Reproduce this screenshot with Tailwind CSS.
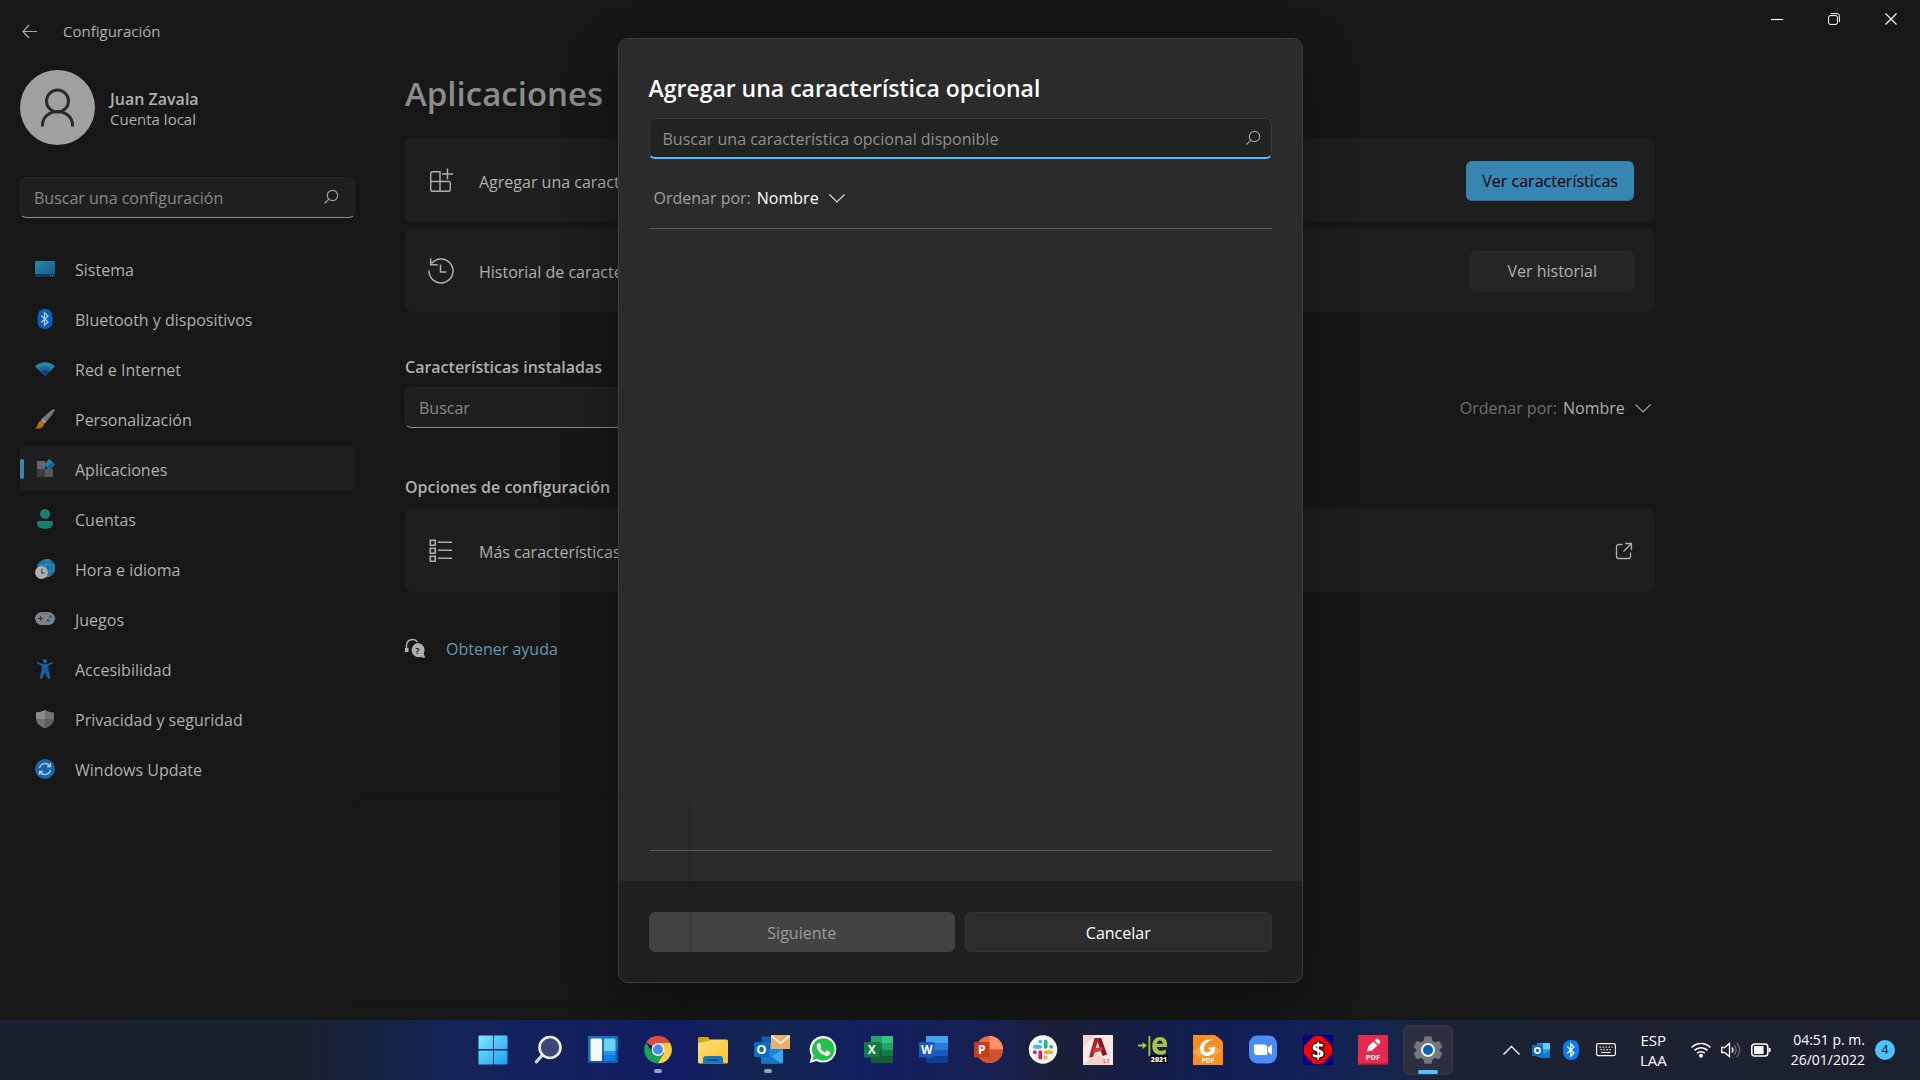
<!DOCTYPE html>
<html lang="es">
<head>
  <meta charset="UTF-8" />
  <meta name="viewport" content="width=device-width, initial-scale=1" />
  <title>Configuración</title>
  <script src="https://cdn.jsdelivr.net/npm/@tailwindcss/browser@4"></script>
  <style>
    body {
      font-family: 'Open Sans', 'Noto Sans', sans-serif;
    }
  </style>
</head>
<body class="h-screen flex flex-col overflow-hidden bg-[#171717] text-base text-[#b0b0b0]">

  <!-- Settings window -->
  <div class="relative flex-1 min-h-0 flex flex-col overflow-hidden">
    <header class="flex justify-between items-start">
      <div class="flex items-center h-[62px] pl-[22px] gap-[26px]">
        <button type="button" aria-label="Atrás">
          <svg class="w-[15px] h-[15px]" viewBox="0 0 15 15" fill="none" stroke="#a8a8a8" stroke-width="1.2"><path d="M15 7.5H1M7 1L1 7.5L7 14" /></svg>
        </button>
        <span class="text-[15px]">Configuración</span>
      </div>
      <div class="flex h-[38px] items-center pr-px text-white">
        <button type="button" aria-label="Minimizar" class="w-[57px] flex justify-center">
          <svg class="w-3 h-3" viewBox="0 0 12 12" fill="none" stroke="currentColor"><path d="M0 6.5H12" stroke-width="1.2" /></svg>
        </button>
        <button type="button" aria-label="Restaurar" class="w-[57px] flex justify-center">
          <svg class="w-3 h-3" viewBox="0 0 12 12" fill="none" stroke="currentColor"><rect x=".6" y="2.6" width="8.8" height="8.8" rx="1.5" /><path d="M2.8 .6H9.2a2.2 2.2 0 0 1 2.2 2.2V9" /></svg>
        </button>
        <button type="button" aria-label="Cerrar" class="w-[57px] flex justify-center">
          <svg class="w-3 h-3" viewBox="0 0 12 12" fill="none" stroke="currentColor" stroke-width="1.1"><path d="M.5 .5L11.5 11.5M11.5 .5L.5 11.5" /></svg>
        </button>
      </div>
    </header>

    <div class="flex flex-1 min-h-0 pt-2">
      <aside class="w-[355px] shrink-0 pl-5">
        <div class="flex items-center gap-[15px]">
          <svg class="w-[75px] h-[75px]" viewBox="0 0 75 75" fill="none">
            <circle cx="37.5" cy="37.5" r="37.5" fill="#a0a0a0" />
            <g stroke="#2a2a2a" stroke-width="3"><circle cx="37.5" cy="31" r="11" /><path d="M22.500 56.500V55a15 13.500 0 0 1 30 0v1.500" /></g>
          </svg>
          <div class="pt-0.5">
            <p class="font-semibold leading-5">Juan Zavala</p>
            <p class="text-[15px] leading-5">Cuenta local</p>
          </div>
        </div>

        <div class="relative mt-8">
          <input type="text" aria-label="Buscar una configuración" placeholder="Buscar una configuración" class="w-full h-[41px] rounded-md bg-[#1f1f1f] border border-[#252525] border-b-[#8a8a8a] px-[13px] placeholder:text-[#888888] outline-none" />
          <svg class="absolute right-4 top-3 w-4 h-4" viewBox="0 0 16 16" fill="none" stroke="#a0a0a0" stroke-width="1.2"><circle cx="9.500" cy="6.500" r="5.200" /><path d="M5.800 10.200L1.500 14.500" /></svg>
        </div>

        <nav class="mt-7 flex flex-col gap-[5px]">
          <a href="#" class="flex items-center h-[45px] pl-[15px] gap-5 rounded-md">
            <svg class="w-5 h-5" viewBox="0 0 20 20"><defs><linearGradient id="sis" x1="0" y1="0" x2="1" y2="1"><stop offset="0" stop-color="#2a86a4" /><stop offset=".5" stop-color="#1c7296" /><stop offset="1" stop-color="#17558c" /></linearGradient></defs><rect y="2" width="20" height="16" rx="1" fill="url(#sis)" /><path d="M0 15H20v2a1 1 0 0 1-1 1H1a1 1 0 0 1-1-1z" fill="#15355e" /><path d="M15 16h1v1h-1zM17 16h1v1h-1z" fill="#5d8ca8" /></svg>
            <span class="pt-0.5">Sistema</span>
          </a>
          <a href="#" class="flex items-center h-[45px] pl-[15px] gap-5 rounded-md">
            <svg class="w-5 h-5" viewBox="0 0 20 20" fill="none"><rect x="2.500" width="15" height="20" rx="7" fill="#0561b8" /><path d="M6.200 6.500L13 13l-3.500 3.200V3.800L13 7L6.200 13.500" stroke="#b9c6d3" stroke-width="1.300" /></svg>
            <span class="pt-0.5">Bluetooth y dispositivos</span>
          </a>
          <a href="#" class="flex items-center h-[45px] pl-[15px] gap-5 rounded-md">
            <svg class="w-5 h-5" viewBox="0 0 20 20"><path d="M10 17L0 7.500a14 14 0 0 1 20 0z" fill="#2984a5" /><path d="M10 17L3 10.200a10 10 0 0 1 14 0z" fill="#166498" /><path d="M10 17L5.600 12.700a6.500 6.500 0 0 1 8.800 0z" fill="#123f78" /></svg>
            <span class="pt-0.5">Red e Internet</span>
          </a>
          <a href="#" class="flex items-center h-[45px] pl-[15px] gap-5 rounded-md">
            <svg class="w-5 h-5" viewBox="0 0 20 20"><path d="M18 .4c1.200-.7 2.300.4 1.500 1.600C17 6 13 11 9.500 14.500L6 11C9.500 7 14 2.800 18 .4z" fill="#74777b" /><path d="M7.500 9.500L11 13l-1.500 1.500L6 11z" fill="#a0a0a0" /><path d="M6.300 11.800c1.500 0 3.200 1.500 2.700 3.500C8 19.500 4 20 .5 19.800c-.5-.4.200-.8 1-1.600C3.200 16 2.800 12.300 6.300 11.800z" fill="#bd6c1e" /><path d="M1 19.200c3 .2 6-.2 7.500-2.700-.8 3-4.500 3.600-8 3.300z" fill="#9c3d1c" /></svg>
            <span class="pt-0.5">Personalización</span>
          </a>
          <a href="#" aria-current="page" class="relative flex items-center h-[45px] pl-[15px] gap-5 rounded-md bg-[#1f1f1f]">
            <span class="absolute left-0 top-[13px] w-1 h-5 rounded-full bg-[#3a87b3]"></span>
            <svg class="w-5 h-5" viewBox="0 0 20 20"><path d="M2 2h8v8H2z" fill="#646669" /><path d="M2 10h8v8H3a1 1 0 0 1-1-1z" fill="#3b3d40" /><path d="M10 10h8v7a1 1 0 0 1-1 1h-7z" fill="#555759" /><path d="M14.300 0L20 5.600L14.300 11.200L8.800 5.600z" fill="#2283ac" /><path d="M17.100 2.800L20 5.600L14.300 11.200L11.500 8.400z" fill="#17619f" /></svg>
            <span class="pt-0.5">Aplicaciones</span>
          </a>
          <a href="#" class="flex items-center h-[45px] pl-[15px] gap-5 rounded-md">
            <svg class="w-5 h-5" viewBox="0 0 20 20"><circle cx="10" cy="5" r="5" fill="#17806c" /><path d="M3.800 12h12.400c1 0 1.800.8 1.800 1.800C18 18 14.500 20 10 20s-8-2-8-6.200C2 12.800 2.800 12 3.800 12z" fill="#15806f" /></svg>
            <span class="pt-0.5">Cuentas</span>
          </a>
          <a href="#" class="flex items-center h-[45px] pl-[15px] gap-5 rounded-md">
            <svg class="w-5 h-5" viewBox="0 0 20 20" fill="none"><circle cx="11" cy="9" r="9" fill="#176fa0" /><path d="M11 0a9 9 0 0 1 0 18M11 0c6 5 6 13 0 18M11 0v18M2 6h17M4 12h15" stroke="#3c9bc0" stroke-width=".8" /><circle cx="6.500" cy="13.500" r="6.500" fill="#aeb0b2" /><path d="M6.700 9.800v4h3" stroke="#4c4c4c" stroke-width="1.200" /></svg>
            <span class="pt-0.5">Hora e idioma</span>
          </a>
          <a href="#" class="flex items-center h-[45px] pl-[15px] gap-5 rounded-md">
            <svg class="w-5 h-5" viewBox="0 0 20 20"><rect y="3" width="20" height="13" rx="6.500" fill="#808386" /><path d="M5 7h1v2h2v1H6v2H5v-2H3V9h2z" fill="#303234" /><circle cx="15.500" cy="7.800" r="1.500" fill="#1760a8" /><circle cx="13.200" cy="11.500" r="1.500" fill="#1760a8" /><path d="M8 4h1v1H8zM11 4h1v1h-1z" fill="#444" /></svg>
            <span class="pt-0.5">Juegos</span>
          </a>
          <a href="#" class="flex items-center h-[45px] pl-[15px] gap-5 rounded-md">
            <svg class="w-5 h-5" viewBox="0 0 20 20"><circle cx="10" cy="2.100" r="2.100" fill="#1768a8" /><path d="M2.700 2.900C4.500 3.900 7.500 5 10 5s5.500-1.100 7.300-2.100c.9-.3 1.200 1 .5 1.500L13.500 6.600V11l1.600 7.800c0 1.200-1.700 1.600-2.200.5L10 13.500L7.100 19.300c-.5 1.100-2.200.7-2.200-.5L6.500 11V6.600L2.200 4.400c-.7-.5-.4-1.800.5-1.500z" fill="#1560a4" /></svg>
            <span class="pt-0.5">Accesibilidad</span>
          </a>
          <a href="#" class="flex items-center h-[45px] pl-[15px] gap-5 rounded-md">
            <svg class="w-5 h-5" viewBox="0 0 20 20"><path d="M10 1c2.500 1.600 5.500 2.500 9 2.500V9c0 5-4 8.600-9 10.300C5 17.600 1 14 1 9V3.500C4.500 3.500 7.500 2.600 10 1z" fill="#6f7173" /><path d="M10 1v9H1V3.500C4.500 3.500 7.500 2.600 10 1z" fill="#8a8c8e" /><path d="M10 10h9c-.4 4.500-4.200 7.700-9 9.300z" fill="#5c5e60" /></svg>
            <span class="pt-0.5">Privacidad y seguridad</span>
          </a>
          <a href="#" class="flex items-center h-[45px] pl-[15px] gap-5 rounded-md">
            <svg class="w-5 h-5" viewBox="0 0 20 20" fill="none"><circle cx="10" cy="10" r="10" fill="#1767ab" /><path d="M4.500 9a5.700 5.700 0 0 1 10.300-2M15.500 11a5.700 5.700 0 0 1-10.300 2M15.400 4.200v3.300h-3.300M4.600 15.800v-3.300h3.300" stroke="#b7c9d9" stroke-width="1.400" /></svg>
            <span class="pt-0.5">Windows Update</span>
          </a>
        </nav>
      </aside>

      <main class="flex-1 min-w-0 max-w-[1300px] pl-[50px]">
        <h1 class="text-[33px] leading-12 font-semibold text-[#8c8c8c]">Aplicaciones</h1>

        <section class="mt-5 flex flex-col gap-1.5">
          <div class="flex items-center h-[84px] px-5 pt-0.5 rounded-md bg-[#1e1e1e] border border-[#1b1b1b]">
            <svg class="w-[30px] h-[30px] mr-[23px]" viewBox="0 0 30 30" fill="none" stroke="#b0b0b0" stroke-width="1.400"><path d="M4.700 7.500q0-1.800 1.800-1.800H14V25.300H6.500q-1.800 0-1.800-1.800zM4.700 15.500H22.500q1.800 0 1.800 1.800v6.200q0 1.800-1.800 1.800H14M21.500 2.500v11M16 8h11" /></svg>
            <span class="pt-0.5">Agregar una característica opcional</span>
            <button type="button" class="ml-auto h-10 px-4 rounded-md bg-[#3785b2] border-b border-[#2b6f96] text-black">Ver características</button>
          </div>
          <div class="flex items-center h-[84px] px-5 pt-0.5 rounded-md bg-[#1e1e1e] border border-[#1b1b1b]">
            <svg class="w-[30px] h-[30px] mr-[23px]" viewBox="0 0 30 30" fill="none" stroke="#b0b0b0" stroke-width="1.500"><path d="M3 14.500a12 12 0 1 0 2.800-7.300M4.700 2.500v6.300h7M14.500 8.500v7.500h5.800" /></svg>
            <span class="pt-0.5">Historial de características opcionales</span>
            <button type="button" class="ml-auto h-10 px-9 rounded-md bg-[#252525] border border-[#2a2a2a]">Ver historial</button>
          </div>
        </section>

        <h2 class="mt-[43px] leading-6 font-semibold">Características instaladas</h2>
        <div class="mt-2 flex items-center justify-between">
          <input type="text" aria-label="Buscar" placeholder="Buscar" class="w-[375px] h-[41px] rounded-md bg-[#1f1f1f] border border-[#252525] border-b-[#8a8a8a] px-[13px] placeholder:text-[#888888] outline-none" />
          <div class="flex items-center gap-1.5 pr-1">
            <label for="sortInstalled" class="text-[#707070]">Ordenar por:</label>
            <select id="sortInstalled" class="appearance-none bg-transparent outline-none">
              <option>Nombre</option>
            </select>
            <svg class="ml-1 w-4 h-4 pointer-events-none" viewBox="0 0 16 16" fill="none" stroke="#a0a0a0" stroke-width="1.200"><path d="M.5 4.500L8 12L15.500 4.500" /></svg>
          </div>
        </div>

        <h2 class="mt-[47px] leading-6 font-semibold">Opciones de configuración</h2>
        <a href="#" class="mt-[9px] flex items-center h-[84px] px-5 pt-0.5 rounded-md bg-[#1e1e1e] border border-[#1b1b1b]">
          <svg class="w-[30px] h-[30px] mr-[23px]" viewBox="0 0 30 30" fill="none" stroke="#b0b0b0" stroke-width="1.600"><path d="M4.300 4.300h4.900v4.900H4.300zM4.300 12.300h4.900v4.900H4.300zM4.300 20.300h4.900v4.900H4.300zM12 6.300h14M12 14.300h14M12 22.300h14" /></svg>
          <span class="pt-0.5">Más características de Windows</span>
          <svg class="ml-auto w-5 h-5" viewBox="0 0 20 20" fill="none" stroke="#b0b0b0" stroke-width="1.300"><path d="M8.500 3.500H4.500a2 2 0 0 0-2 2v10a2 2 0 0 0 2 2h10a2 2 0 0 0 2-2v-4M11 2.500h6.500V9M17.500 2.500L9.500 10.500" /></svg>
        </a>

        <div class="mt-[43px] flex items-center gap-5">
          <svg class="w-[21px] h-[21px]" viewBox="0 0 21 21" fill="none">
            <path d="M1.500 12V7.500a6 6 0 0 1 11-3.300" stroke="#b0b0b0" stroke-width="1.400" />
            <path d="M0 10h3.500v4H0z" fill="#b0b0b0" />
            <path d="M12.500 5a7 7 0 0 1 6.200 10.300l1.500 4.700-5-.9A7 7 0 1 1 12.500 5z" fill="#b0b0b0" />
            <text x="12.500" y="15.500" text-anchor="middle" font-size="9" font-weight="700" fill="#202020">?</text>
          </svg>
          <a href="#" class="pt-0.5 text-[#639aaf]">Obtener ayuda</a>
        </div>
      </main>
    </div>

    <!-- Dialog -->
    <div class="absolute inset-0 flex items-center justify-center">
      <div role="dialog" aria-labelledby="dialogTitle" class="w-[685px] h-[calc(100%-75px)] flex flex-col rounded-[10px] border border-[#3e3e3e] bg-[#202020] shadow-[0_20px_50px_rgba(0,0,0,0.35)] overflow-hidden text-white">
        <div class="flex-1 flex flex-col px-[30px] pt-[33px] pb-[30px] bg-[#2b2b2b]">
          <h2 id="dialogTitle" class="text-[23px] leading-8 font-semibold">Agregar una característica opcional</h2>
          <div class="relative mt-3.5">
            <input type="text" aria-label="Buscar una característica opcional disponible" placeholder="Buscar una característica opcional disponible" class="w-full h-[41px] rounded-md bg-[#222222] border border-[#393939] border-b-2 border-b-[#4cc2ff] px-[13px] pt-0.5 placeholder:text-[#8f8f8f] outline-none" />
            <svg class="absolute right-[11px] top-3 w-4 h-4" viewBox="0 0 16 16" fill="none" stroke="#9a9a9a" stroke-width="1.200"><circle cx="9.500" cy="6.500" r="5.200" /><path d="M5.800 10.200L1.500 14.500" /></svg>
          </div>
          <div class="flex items-center gap-1.5 h-[70px] pt-2.5 pl-[5px] border-b border-[#5a5a5a]">
            <label for="sortAvailable" class="text-[#a0a0a0]">Ordenar por:</label>
            <select id="sortAvailable" class="appearance-none bg-transparent outline-none">
              <option>Nombre</option>
            </select>
            <svg class="ml-1 w-4 h-4 pointer-events-none" viewBox="0 0 16 16" fill="none" stroke="#d8d8d8" stroke-width="1.200"><path d="M.5 4.500L8 12L15.500 4.500" /></svg>
          </div>
          <div class="flex-1 border-b border-[#5a5a5a]"></div>
        </div>
        <div class="grid grid-cols-2 gap-2.5 p-[30px] border-t border-[#1d1d1d]">
          <button type="button" disabled class="h-10 pt-0.5 rounded-md bg-[#434343] border border-[#434343] text-[#9c9c9c]">Siguiente</button>
          <button type="button" class="h-10 pt-0.5 rounded-md bg-[#2d2d2d] border border-[#333333]">Cancelar</button>
        </div>
      </div>
    </div>

    <!-- Faint shadow left by a closed flyout -->
    <div class="absolute left-[353px] bottom-4 w-[336px] h-[205px] rounded-lg pointer-events-none shadow-[1px_1px_4px_rgba(0,0,0,0.18)]"></div>
  </div>

  <!-- Taskbar -->
  <footer class="relative h-[60px] shrink-0 flex items-center justify-center text-white bg-[linear-gradient(90deg,#1a202c_0%,#19212f_16%,#14245a_24%,#111c63_35%,#12264f_40%,#121f60_45%,#172050_52%,#1b1f36_55%,#131e50_62%,#111f58_67%,#14264f_72%,#1b2233_76%,#1c212e_100%)]">
    <div class="flex gap-[5px] pl-px">
      <button type="button" aria-label="Inicio" class="w-[50px] h-[50px] flex items-center justify-center">
        <svg class="w-[30px] h-[30px]" viewBox="0 0 30 30"><defs><linearGradient id="win" x1="0" y1="0" x2="1" y2="1"><stop offset="0" stop-color="#7ce9fe" /><stop offset="1" stop-color="#1b9ef5" /></linearGradient></defs><path d="M1.500.5H15V14H.5V1.500a1 1 0 0 1 1-1zM16 .5h12.500a1 1 0 0 1 1 1V14H16zM.5 15.500H15v14H1.500a1 1 0 0 1-1-1zM16 15.500h13.500v13a1 1 0 0 1-1 1H16z" fill="url(#win)" /></svg>
      </button>
      <button type="button" aria-label="Buscar" class="w-[50px] h-[50px] flex items-center justify-center">
        <svg class="w-[30px] h-[30px]" viewBox="0 0 30 30" fill="none"><path d="M9.500 20L3.300 26.800" stroke="#d8d8d8" stroke-width="3.200" stroke-linecap="round" /><circle cx="17" cy="12.500" r="10.500" fill="#3e4676" stroke="#f0f0f0" stroke-width="2.600" /></svg>
      </button>
      <button type="button" aria-label="Widgets" class="w-[50px] h-[50px] flex items-center justify-center">
        <svg class="w-[30px] h-[30px]" viewBox="0 0 30 30"><rect y="1" width="30" height="27" rx="1.500" fill="#0f5dac" /><path d="M0 2.500A1.500 1.500 0 0 1 1.500 1H28.500A1.500 1.500 0 0 1 30 2.500V14L0 26z" fill="#1370c4" /><rect x="2.500" y="3.500" width="11.500" height="22.500" rx="1.500" fill="#f8f8f8" /><path d="M16 5a1.500 1.500 0 0 1 1.500-1.500H26A1.500 1.500 0 0 1 27.500 5V16H16z" fill="#69d3fc" /><path d="M16 16h11.500v4.500H16z" fill="#1a97ea" /><path d="M16 20.500h11.500v4A1.500 1.500 0 0 1 26 26h-8.500a1.500 1.500 0 0 1-1.500-1.500z" fill="#0d7fe6" /></svg>
      </button>
      <button type="button" aria-label="Google Chrome" class="relative w-[50px] h-[50px] flex items-center justify-center">
        <svg class="w-[30px] h-[30px]" viewBox="0 0 30 30"><path d="M15 14.500L3.200 7.500A13.700 13.700 0 0 1 27 7.800H15z" fill="#db4c3f" /><path d="M15 7.800H27A13.700 13.700 0 0 1 14.500 28.300L21 18z" fill="#ffcd41" /><path d="M3.200 7.500A13.700 13.700 0 0 0 14.500 28.300L20.800 18.200L15 14.500L9.200 17.800z" fill="#1da15f" /><circle cx="15" cy="14.500" r="6.500" fill="#f1f1f1" /><circle cx="15" cy="14.500" r="5" fill="#4c8bf5" /></svg>
        <span class="absolute bottom-0.5 w-2 h-1 rounded-full bg-[#9aa0ba]"></span>
      </button>
      <button type="button" aria-label="Explorador de archivos" class="w-[50px] h-[50px] flex items-center justify-center">
        <svg class="w-[30px] h-[30px]" viewBox="0 0 30 30"><defs><linearGradient id="fold" x1="0" y1="0" x2="1" y2="1"><stop offset="0" stop-color="#ffe07a" /><stop offset="1" stop-color="#ffc327" /></linearGradient></defs><path d="M0 3.500A1.500 1.500 0 0 1 1.500 2h8.500l3 3.500V12H0z" fill="#e0a20d" /><path d="M0 9V8L11 6l2-1.500H28.500A1.500 1.500 0 0 1 30 6v21a1.500 1.500 0 0 1-1.500 1.500h-27A1.500 1.500 0 0 1 0 27z" fill="url(#fold)" /><path d="M5 28.500V24a3 3 0 0 1 3-3H22a3 3 0 0 1 3 3v4.500z" fill="#1477c5" /><rect x="9.500" y="24" width="11" height="2" rx="1" fill="#0d5590" /></svg>
      </button>
      <button type="button" aria-label="Outlook" class="relative w-[50px] h-[50px] flex items-center justify-center">
        <svg class="w-[30px] h-[30px] overflow-visible" viewBox="0 0 30 30"><path d="M8.500 1.500h17.500V15H8.500z" fill="#0f5fae" /><path d="M17 8h12v8H17z" fill="#2b9be3" /><path d="M8 14h22v13.500a1 1 0 0 1-1 1H9a1 1 0 0 1-1-1z" fill="#1a86d6" /><path d="M30 14L8.500 28.300H29a1 1 0 0 0 1-1z" fill="#37a9e8" /><path d="M8 14l20 14.200H9a1 1 0 0 1-1-1z" fill="#1878c5" /><rect x="1" y="7" width="15" height="15" rx="1" fill="#0d6ac2" /><text x="8.500" y="19" text-anchor="middle" font-size="13" font-weight="700" fill="#fff">O</text><path d="M18 0h19v14H18z" fill="#edb06c" /><path d="M18.500 .8l9 7.500l9-7.500" stroke="#fff" stroke-width="1.600" fill="none" /></svg>
        <span class="absolute bottom-0.5 w-2 h-1 rounded-full bg-[#9aa0ba]"></span>
      </button>
      <button type="button" aria-label="WhatsApp" class="w-[50px] h-[50px] flex items-center justify-center">
        <svg class="w-[30px] h-[30px]" viewBox="0 0 30 30"><path d="M15 1a13.300 13.300 0 1 1-6.300 25L1.500 28l2-7A13.300 13.300 0 0 1 15 1z" fill="#f4f4f4" /><path d="M15 3.200a11.200 11.200 0 1 1-5.900 20.600L4.600 25l1.200-4.500A11.200 11.200 0 0 1 15 3.200z" fill="#26c14c" /><path d="M10.300 8.300c.7-.6 1.500-.4 1.800.3l1 2.300c.2.500-.2 1.200-.9 2 1.200 2.200 2.700 3.600 5 4.500l1.200-1.500c.3-.4.7-.5 1.200-.2l2.400 1.200c.7.400.5 1.300.1 2.100-.9 1.700-3 2.200-5 1.500-4.200-1.400-6.700-4-8.200-7.700-.5-1.800 0-3.500 1.400-4.500z" fill="#fff" /></svg>
      </button>
      <button type="button" aria-label="Excel" class="w-[50px] h-[50px] flex items-center justify-center">
        <svg class="w-[30px] h-[30px]" viewBox="0 0 30 30"><path d="M8 1.500A.5.500 0 0 1 8.500 1H19v14H8z" fill="#21a366" /><path d="M19 1h10.500a.5.500 0 0 1 .5.500V8H19z" fill="#33c481" /><path d="M8 8h11v7H8z" fill="#107c41" /><path d="M19 8h11v7H19z" fill="#21a366" /><path d="M8 15h11v13H8z" fill="#185c37" /><path d="M19 15h11v6H19z" fill="#107c41" /><path d="M8 21h22v7H8z" fill="#185c37" /><rect x="1" y="7" width="15.500" height="15.500" rx="1" fill="#107c41" /><text x="8.700" y="19" text-anchor="middle" font-size="12" font-weight="700" fill="#fff">X</text></svg>
      </button>
      <button type="button" aria-label="Word" class="w-[50px] h-[50px] flex items-center justify-center">
        <svg class="w-[30px] h-[30px]" viewBox="0 0 30 30"><path d="M8 1h22v7H8z" fill="#41a5ee" /><path d="M8 8h22v7H8z" fill="#2b7cd3" /><path d="M8 15h22v6.500H8z" fill="#185abd" /><path d="M8 21.500h22V28H8z" fill="#103f91" /><rect x="1" y="7" width="15.500" height="15.500" rx="1" fill="#185abd" /><text x="8.700" y="19" text-anchor="middle" font-size="12" font-weight="700" fill="#fff">W</text></svg>
      </button>
      <button type="button" aria-label="PowerPoint" class="w-[50px] h-[50px] flex items-center justify-center">
        <svg class="w-[30px] h-[30px]" viewBox="0 0 30 30"><circle cx="16.500" cy="14.500" r="13.500" fill="#ed6c47" /><path d="M16.500 1A13.500 13.500 0 0 1 30 14.500H16.500z" fill="#ff8f6b" /><path d="M3 14.500H30a13.500 13.500 0 0 1-27 0z" fill="#d35230" /><rect x="1" y="7" width="15.500" height="15.500" rx="1" fill="#c43e1c" /><text x="8.700" y="19" text-anchor="middle" font-size="12" font-weight="700" fill="#fff">P</text></svg>
      </button>
      <button type="button" aria-label="Slack" class="w-[50px] h-[50px] flex items-center justify-center">
        <svg class="w-[30px] h-[30px]" viewBox="0 0 30 30" fill="none" stroke-width="3.800" stroke-linecap="round"><circle cx="15" cy="14.500" r="14.200" fill="#fff" /><path d="M12.300 6.300v.2M6.800 11.800h5.500" stroke="#36c5f0" /><path d="M17.700 6.500v5.300M23.200 11.800h-.2" stroke="#2eb67d" /><path d="M17.700 17.200h5.500M17.700 22.700v-.2" stroke="#ecb22e" /><path d="M12.300 17.200v5.500M6.800 17.200h.2" stroke="#e01e5a" /></svg>
      </button>
      <button type="button" aria-label="AutoCAD LT" class="w-[50px] h-[50px] flex items-center justify-center">
        <svg class="w-[30px] h-[30px]" viewBox="0 0 30 30"><path d="M0 0h30v30H0z" fill="#f8eae5" /><path d="M0 12L12 0H0zM0 30L14 18L30 30z" fill="#f0d5cd" /><path d="M6 22.500L11.500 3H18l6 16.500-4.500 1.500-2-5-6 1.500-1.500 4.500z" fill="#b51f28" /><path d="M12.500 13.800L14.500 7l2 5.500z" fill="#f8eae5" /><path d="M15 3h3l6 16.500-3.500 1z" fill="#8d141d" /><path d="M10 14l9-2 .8 3-9 2.500z" fill="#d83740" /><text x="23.500" y="28" text-anchor="middle" font-size="6" font-weight="600" fill="#d0424a">LT</text></svg>
      </button>
      <button type="button" aria-label="ETABS 2021" class="w-[50px] h-[50px] flex items-center justify-center">
        <svg class="w-[30px] h-[30px]" viewBox="0 0 30 30"><path d="M0 9.500h4.500V7L9 10.500L4.500 14v-2.500H0zM10.500 1h1.800v20h-1.800z" fill="#a5c63b" /><path d="M29 12H18.800c.4 2.800 2 3.800 4.200 3.800 1.800 0 3.300-.4 4.800-1.200v3.800c-1.600.9-3.500 1.300-5.700 1.300-5 0-7.800-3.100-7.800-8.600 0-5.600 3-9.100 7.800-9.100 4.500 0 7 2.900 7 7.800zM24.800 8.800c0-2-.9-3.300-2.700-3.300s-3 1.200-3.300 3.300z" fill="#a5c63b" /><path d="M12.500 20H30v8H12.500z" fill="#000" /><text x="21" y="26.500" text-anchor="middle" font-size="7" font-weight="800" fill="#fff">2021</text></svg>
      </button>
      <button type="button" aria-label="Foxit PDF Reader" class="w-[50px] h-[50px] flex items-center justify-center">
        <svg class="w-[30px] h-[30px]" viewBox="0 0 30 30"><path d="M0 0h22l8 7v23H0z" fill="#f88d22" /><path d="M0 17l10-8v16zM20 10l8 6-8 7z" fill="#faa550" /><path d="M24 1l5 5h-5z" fill="#f88d22" /><path d="M20.500 4.500C13 3 7 7.500 7 13.500c0 5 3.500 7.500 7.500 7.500 5 0 8-3.500 7.500-9l-7 .5c0 2 1 2.500 3 2-.8 2-2 3-3.800 3-2 0-3.500-1.500-3.200-4.500.4-4 4-7.500 9.500-8.500z" fill="#fff" /><text x="15" y="28" text-anchor="middle" font-size="6.500" font-weight="700" fill="#fff">PDF</text></svg>
      </button>
      <button type="button" aria-label="Zoom" class="w-[50px] h-[50px] flex items-center justify-center">
        <svg class="w-[30px] h-[30px]" viewBox="0 0 30 30"><rect x="1" y=".5" width="28" height="28" rx="8.500" fill="#4a8df8" /><path d="M6 9.500h10a3 3 0 0 1 3 3V20H9a3 3 0 0 1-3-3zM19.800 12.500L24 9.700V19.800l-4.200-2.800z" fill="#fff" /></svg>
      </button>
      <button type="button" aria-label="Precios" class="w-[50px] h-[50px] flex items-center justify-center">
        <svg class="w-[30px] h-[30px]" viewBox="0 0 30 30"><path d="M0 0h30v30H0z" fill="#000080" /><path d="M11 1h8l10 10v8L19 29h-8L1 19v-8z" fill="#f00" /><text x="15" y="23" text-anchor="middle" font-size="22" font-weight="700" fill="#fff" stroke="#000" stroke-width="2.500" paint-order="stroke">$</text></svg>
      </button>
      <button type="button" aria-label="Editor PDF" class="w-[50px] h-[50px] flex items-center justify-center">
        <svg class="w-[30px] h-[30px]" viewBox="0 0 30 30"><path d="M0 0h30v30H0z" fill="#e62a4f" /><path d="M0 28.500h30V30H0z" fill="#a8182f" /><path d="M9 16.500l1.200-5L15.500 6.500l4 4L14 15.500zM16.500 5.500L18 4q1-.8 2 0l2 2q.8 1 0 2L20.500 9.500z" fill="#fff" /><text x="15" y="25" text-anchor="middle" font-size="7.500" font-weight="700" fill="#fff">PDF</text></svg>
      </button>
      <button type="button" aria-label="Configuración" class="relative w-[50px] h-[50px] flex items-center justify-center rounded-md bg-[#2b2f40] border border-[#363a4a]">
        <svg class="w-[30px] h-[30px]" viewBox="0 0 30 30"><path d="M11.500 1.500h7l1 4.300 2.500 1.400 4.200-1.300 3.300 6-3.200 2.800v.8l3.200 2.800-3.300 6-4.200-1.300-2.500 1.400-1 4.300h-7l-1-4.300L8 23l-4.200 1.300-3.300-6 3.200-2.800v-.8L.5 11.900l3.300-6L8 7.200l2.500-1.400z" fill="#74787c" /><circle cx="15" cy="15" r="7" fill="#f2f2f2" /><circle cx="15" cy="15" r="5" fill="#0c63b4" /></svg>
        <span class="absolute bottom-0 w-5 h-1 rounded-full bg-[#4cc2ff]"></span>
      </button>
    </div>

    <div class="absolute right-[25px] inset-y-0 flex items-center">
      <button type="button" aria-label="Mostrar iconos ocultos" class="mr-3">
        <svg class="w-[17px] h-[17px]" viewBox="0 0 17 17" fill="none" stroke="#fff" stroke-width="1.300"><path d="M.5 12.500L8.500 4.500L16.500 12.500" /></svg>
      </button>
      <svg class="w-[19px] h-[19px] mr-3" viewBox="0 0 19 19"><path d="M5 2h13v14H5z" fill="#1c84d4" /><path d="M11 2h7v6h-7z" fill="#5bd0fa" /><path d="M5 8l13 9V8z" fill="#2a9ee4" /><path d="M18 9v8H7z" fill="#1479cc" /><rect y="4" width="11" height="11" rx="1" fill="#0f6cc0" /><circle cx="5.500" cy="9.500" r="2.600" fill="none" stroke="#fff" stroke-width="1.600" /></svg>
      <svg class="w-4 h-5 mr-[17px]" viewBox="0 0 16 20" fill="none"><rect width="16" height="20" rx="7.500" fill="#0a7df5" /><path d="M4.200 6.500L11 13l-3.200 3.200V3.800L11 7L4.200 13.500" stroke="#fff" stroke-width="1.200" /></svg>
      <svg class="w-5 h-5 mr-6" viewBox="0 0 20 20" fill="none"><rect x=".6" y="3.600" width="18.800" height="12" rx="1.800" stroke="#fff" stroke-width="1.200" /><path d="M3.500 7.200h13M4.500 9.700h12" stroke="#fff" stroke-width="1.200" stroke-dasharray="1.300 1.700" /><path d="M5.500 12.500h9" stroke="#fff" stroke-width="1.200" /></svg>
      <div class="text-[15px] leading-5 text-center mr-6">ESP<br />LAA</div>
      <svg class="w-5 h-5 mr-2.5" viewBox="0 0 20 20" fill="none" stroke="#fff" stroke-width="1.500"><path d="M.6 7.500a13.300 13.300 0 0 1 18.800 0M3.400 10.400a9.300 9.300 0 0 1 13.200 0M6.200 13.300a5.300 5.300 0 0 1 7.600 0" /><circle cx="10" cy="15.800" r="1.200" fill="#fff" /></svg>
      <svg class="w-5 h-5 mr-2.5" viewBox="0 0 20 20" fill="none" stroke="#fff" stroke-width="1.300"><path d="M.7 7.500h3L8.500 3.500v13L3.700 12.500h-3zM11 7.500a4 4 0 0 1 0 5" /><path d="M13.300 5.300a7 7 0 0 1 0 9.400M15.800 3a10 10 0 0 1 0 14" stroke="#6a6e78" /></svg>
      <svg class="w-5 h-5 mr-5" viewBox="0 0 20 20" fill="none"><rect x=".8" y="4" width="16" height="12" rx="2.800" stroke="#fff" stroke-width="1.500" /><path d="M3 6h9.500v8H3zM17.500 8h1.200q1 0 1 1v2q0 1-1 1h-1.200z" fill="#fff" /></svg>
      <div class="text-sm leading-5 text-right mr-2.5">04:51 p. m.<br />26/01/2022</div>
      <span class="w-5 h-5 rounded-full bg-[#4cc2ff] text-black text-xs leading-5 text-center">4</span>
    </div>
  </footer>
</body>
</html>
